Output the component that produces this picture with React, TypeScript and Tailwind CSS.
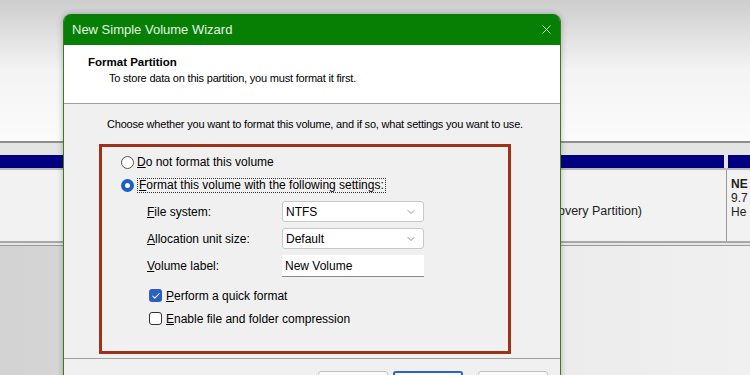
import { X, ChevronDown, Check } from "lucide-react";

const FONT = { fontFamily: '"Liberation Sans", Arial, sans-serif' };

function Combo({ value }: { value: string }) {
  return (
    <div className="w-[142px] h-[21px] bg-white border border-[#c8c8c8] rounded-[3px] flex items-center justify-between pl-[3px] pr-[6px]">
      <span className="text-[12px] text-black">{value}</span>
      <ChevronDown size={12} strokeWidth={1.5} className="text-[#6a6a6a]" />
    </div>
  );
}

export default function App() {
  return (
    <div
      className="relative w-[750px] h-[375px] overflow-hidden bg-[#efefef]"
      style={FONT}
    >
      {/* Disk Management window behind */}
      <div className="flex flex-col h-full">
        <div className="h-[141px] bg-gradient-to-b from-[#cdcdcd] via-[#f4f4f4] to-[#fbfbfb]" />
        <div className="h-[2px] bg-[#8e8e8e]" />
        <div className="h-[12px] bg-[#e4e4e4]" />
        <div className="h-[13px] flex">
          <div className="flex-1 bg-[#000080]" />
          <div className="w-[4px] bg-[#e4e4e4]" />
          <div className="w-[22px] bg-[#000080]" />
        </div>
        <div className="h-[2px] bg-[#b9b9b9]" />
        <div className="h-[71px] flex bg-[#f2f2f2]">
          <div className="flex-1 flex items-center justify-end pr-[84px] text-[12.5px] text-[#222] pt-[12px]">
            overy Partition)
          </div>
          <div className="w-[24px] border-l border-[#9a9a9a] pl-[4px] pt-[7px] text-[12px] leading-[14px] text-[#222] overflow-hidden whitespace-nowrap">
            <div className="font-bold">NE</div>
            <div>9.7</div>
            <div>He</div>
          </div>
        </div>
        <div className="h-[2px] bg-[#a8a8a8]" />
        <div className="h-[2px] bg-[#e6e6e6]" />
        <div className="h-[1px] bg-[#9a9a9a]" />
        <div className="flex-1 bg-gradient-to-r from-[#d2d2d2] via-[#e8e8e8] to-[#f0f0f0]" />
      </div>

      {/* Wizard dialog */}
      <div className="absolute left-[63px] top-[14px] w-[498px] h-[380px] flex flex-col rounded-t-[8px] overflow-hidden border-x border-[#3c7a1e] shadow-[0_0_6px_rgba(0,0,0,0.25)]">
        <div className="h-[31px] shrink-0 bg-[#067f04] flex items-center justify-between pl-[8px] pr-[6px]">
          <span className="text-[13px] text-[#e6f3e6]">New Simple Volume Wizard</span>
          <X size={15} strokeWidth={1.3} className="text-[#e6f3e6]" />
        </div>
        <div className="h-[59px] shrink-0 bg-white border-b border-[#a0a0a0] pl-[24px] pt-[10px]">
          <div className="text-[11.5px] font-bold text-black leading-[14px]">Format Partition</div>
          <div className="text-[11px] text-black leading-[14px] pl-[21px] pt-[2px] tracking-[-0.2px]">
            To store data on this partition, you must format it first.
          </div>
        </div>
        <div className="flex-1 bg-[#f0f0f0] flex flex-col">
          <div className="pl-[43px] pt-[13px] text-[11px] text-black leading-[14px] tracking-[-0.2px]">
            Choose whether you want to format this volume, and if so, what settings you want to use.
          </div>
          <div className="ml-[35px] mt-[13px] w-[412px] h-[210px] border-[3px] border-[#9e3118] flex flex-col pl-[19px] pt-[7px]">
            <label className="flex items-center gap-[3px] h-[16px] text-[12px] text-black">
              <span className="w-[13px] h-[13px] rounded-full border border-[#555] bg-white" />
              <span>
                <u>D</u>o not format this volume
              </span>
            </label>
            <label className="flex items-center gap-[3px] h-[16px] mt-[7px] text-[12px] text-black">
              <span className="w-[13px] h-[13px] rounded-full bg-[#1b5fc9] flex items-center justify-center">
                <span className="w-[5px] h-[5px] rounded-full bg-white" />
              </span>
              <span className="border border-dotted border-[#333] px-[1px] leading-[13px]">
                <u>F</u>ormat this volume with the following settings:
              </span>
            </label>
            <div className="pl-[26px] mt-[8px] flex flex-col gap-[6px] text-[12px] text-black">
              <div className="flex items-center">
                <span className="w-[135px]">
                  <u>F</u>ile system:
                </span>
                <Combo value="NTFS" />
              </div>
              <div className="flex items-center">
                <span className="w-[135px]">
                  <u>A</u>llocation unit size:
                </span>
                <Combo value="Default" />
              </div>
              <div className="flex items-center">
                <span className="w-[135px]">
                  <u>V</u>olume label:
                </span>
                <div className="w-[142px] h-[22px] bg-white border-b border-[#8a8a8a] flex items-center pl-[3px]">
                  New Volume
                </div>
              </div>
            </div>
            <div className="pl-[28px] mt-[12px] flex flex-col gap-[10px] text-[12px] text-black">
              <label className="flex items-center gap-[4px] h-[13px]">
                <span className="w-[13px] h-[13px] rounded-[3px] bg-[#2a5fc8] flex items-center justify-center">
                  <Check size={10} strokeWidth={2.5} className="text-white" />
                </span>
                <span>
                  <u>P</u>erform a quick format
                </span>
              </label>
              <label className="flex items-center gap-[4px] h-[13px]">
                <span className="w-[13px] h-[13px] rounded-[3px] border border-[#333] bg-white" />
                <span>
                  <u>E</u>nable file and folder compression
                </span>
              </label>
            </div>
          </div>
          <div className="mt-[4px] h-[1px] bg-[#a0a0a0]" />
          <div className="flex justify-end gap-[5px] pr-[12px] pt-[12px]">
            <div className="w-[70px] h-[23px] border border-[#c0c0c0] rounded-[3px] bg-[#fbfbfb]" />
            <div className="w-[70px] h-[23px] border-2 border-[#2a64c8] rounded-[3px] bg-[#fbfbfb]" />
            <div className="ml-[10px] w-[70px] h-[23px] border border-[#c0c0c0] rounded-[3px] bg-[#fbfbfb]" />
          </div>
        </div>
      </div>
    </div>
  );
}
